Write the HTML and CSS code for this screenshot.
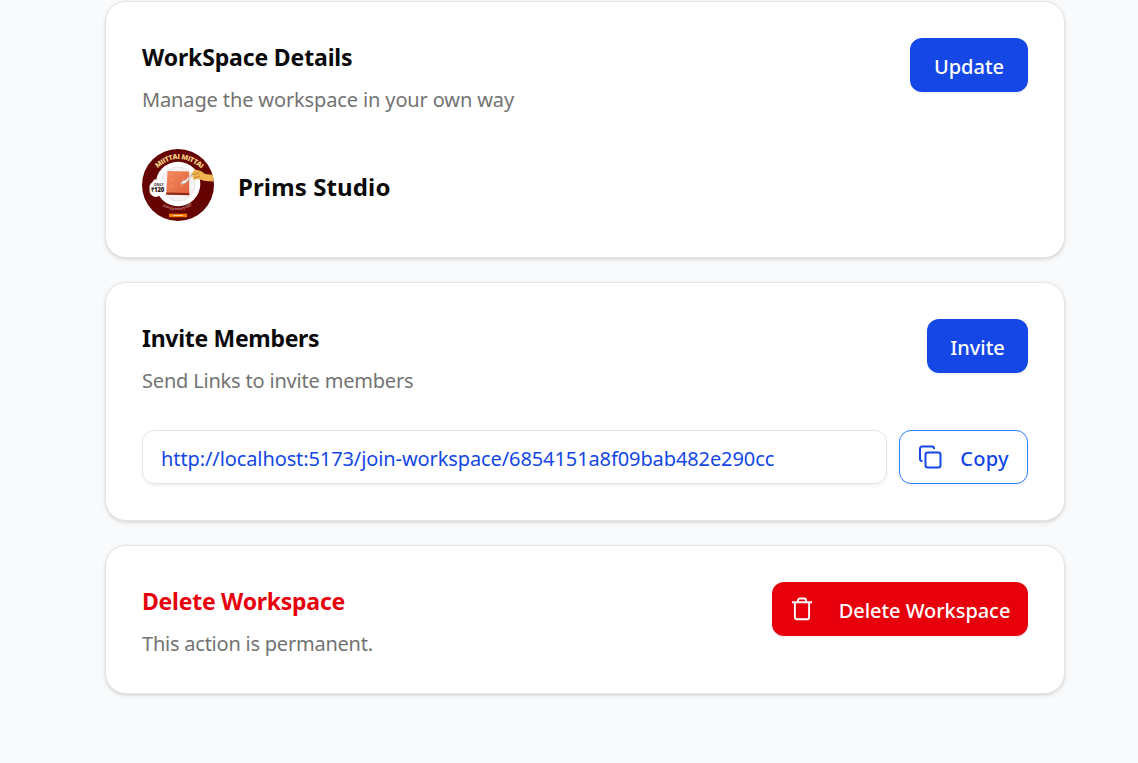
FILE: index.html
```html
<!DOCTYPE html>
<html lang="en">
<head>
<meta charset="utf-8">
<title>Workspace Settings</title>
<link rel="stylesheet" href="styles.css">
</head>
<body>
<main class="page">
  <section class="card">
    <header class="card-head">
      <div>
        <h2 class="title"><span class="t-details">WorkSpace Details</span></h2>
        <p class="sub"><span class="s-manage">Manage the workspace in your own way</span></p>
      </div>
      <button class="btn primary update"><span>Update</span></button>
    </header>
    <div class="identity">
      <svg class="avatar" viewBox="0 0 72 72">
        <defs>
          <clipPath id="round"><circle cx="36" cy="36" r="36"/></clipPath>
          <path id="arc-top" d="M15.500 19.500 Q36 .5 59 19.500"/>
          <path id="arc-bottom" d="M21 57 Q36 66 52 55"/>
          <linearGradient id="sweet" x1="0" y1="0" x2="1" y2="1"><stop offset="0" stop-color="#f5895f"/><stop offset="1" stop-color="#e0623c"/></linearGradient>
        </defs>
        <g clip-path="url(#round)">
          <rect width="72" height="72" fill="#650403"/>
          <circle cx="36" cy="35" r="22.3" fill="#fff"/>
          <circle cx="36" cy="35" r="17" fill="#f4f2f3" stroke="#ddd6d8" stroke-width=".6"/>
          <path d="M10 46.500q-3-2-2.600-6q-1-5 3-7.500q2-4 6.500-3l7 3v12l-7 2q-4 2-6.900-.5z" fill="#fff"/>
          <path d="M10 46.500q-3-2-2.600-6q-1-5 3-7.500q2-4 5-3" fill="none" stroke="#79312b" stroke-width=".5"/>
          <path d="M25.500 22l21.500.5.300 23-23-.5z" fill="url(#sweet)"/>
          <path d="M24.300 43.500l23 .5v2.200l-23-.5z" fill="#8f2b16"/>
          <path d="M29 25l2 1m5-2l3 2m-10 5l3-1m8 0l3 1m-14 6l4 1m5-2l3 1" stroke="#f69b74" stroke-width=".8"/>
          <path d="M38.500 35q1-4 5-4l5-5 2-1-4 6q-3 5-8 4z" fill="#f2e9e5" stroke="#a98d83" stroke-width=".5"/>
          <path d="M49 25l4-4.500 6 1.500 4 3 9 1v6.500l-9-.5-7-2-5 1 1-2-3-1 3-1z" fill="#efb552"/>
          <path d="M50 26l7-2m-5 5l6-2" stroke="#9b5e22" stroke-width=".6"/>
          <text class="a-top"><textPath href="#arc-top" textLength="49">MIITTAI MITTAI</textPath></text>
          <text class="a-only" x="12" y="36.500">ONLY</text>
          <text class="a-price" x="9.300" y="42.800" textLength="13">₹120</text>
          <text class="a-bottom"><textPath href="#arc-bottom" textLength="31">pure joy in every bite!</textPath></text>
          <rect x="27" y="64.700" width="18" height="3.500" fill="#f57c00"/>
          <text class="a-order" x="31" y="67.300" textLength="10">ORDER NOW</text>
        </g>
      </svg>
      <span class="name">Prims Studio</span>
    </div>
  </section>

  <section class="card">
    <header class="card-head">
      <div>
        <h2 class="title"><span class="t-invite">Invite Members</span></h2>
        <p class="sub"><span class="s-send">Send Links to invite members</span></p>
      </div>
      <button class="btn primary invite"><span>Invite</span></button>
    </header>
    <div class="link-row">
      <div class="field"><span>http://localhost:5173/join-workspace/6854151a8f09bab482e290cc</span></div>
      <button class="btn outline">
        <svg class="icon" viewBox="0 0 24 24" fill="none" stroke="currentColor" stroke-width="2">
          <path d="M4.500 16H4a2 2 0 0 1-2-2V3.500a2 2 0 0 1 2-2h10a2 2 0 0 1 2 2V4"/>
          <rect x="7.500" y="7.500" width="15" height="15" rx="2.200"/>
        </svg>
        <span>Copy</span>
      </button>
    </div>
  </section>

  <section class="card">
    <header class="card-head">
      <div>
        <h2 class="title danger-text"><span class="t-delete">Delete Workspace</span></h2>
        <p class="sub"><span class="s-permanent">This action is permanent.</span></p>
      </div>
      <button class="btn danger">
        <svg class="icon" viewBox="0 0 24 24" fill="none" stroke="currentColor" stroke-width="1.900">
          <path d="M2 5.200h20M4.900 5.200v15a2 2 0 0 0 2 2h10.200a2 2 0 0 0 2-2v-15M7.900 5.200V3.500a2 2 0 0 1 2-2h4.200a2 2 0 0 1 2 2v1.700"/>
        </svg>
        <span>Delete Workspace</span>
      </button>
    </header>
  </section>
</main>
</body>
</html>
```

FILE: styles.css
```css
* { box-sizing: border-box; }
body {
  margin: 0;
  background: #f9fafb;
  color: #0a0a0a;
  font-family: "Noto Sans", "Open Sans", sans-serif;
}
.page {
  display: flex;
  flex-direction: column;
  gap: 24px;
  width: 960px;
  height: 763px;
  margin-left: 105px;
  padding-top: 1px;
}
.card {
  flex: none;
  display: flex;
  flex-direction: column;
  gap: 36px;
  padding: 36px;
  background: #fff;
  border: 1px solid #e5e5e5;
  border-radius: 21px;
  box-shadow: 0 1.5px 4.5px rgba(0, 0, 0, .1), 0 1.5px 3px -1.5px rgba(0, 0, 0, .1);
}
.card-head {
  display: flex;
  justify-content: space-between;
  align-items: flex-start;
  height: 75px;
}
.title, .sub { margin: 0; white-space: nowrap; }
.title { padding-top: 1px; font-size: 23px; line-height: 37px; font-weight: 700; }
.sub { padding-top: 8px; font-size: 20px; line-height: 31px; color: #737373; }
.danger-text { color: #e7000b; }
.t-details { letter-spacing: -.14px; }
.t-invite { letter-spacing: -.3px; }
.t-delete { letter-spacing: -.25px; }
.s-manage { letter-spacing: -.13px; }
.s-send { letter-spacing: -.19px; }
.s-permanent { letter-spacing: -.23px; }

.btn {
  flex: none;
  display: flex;
  align-items: center;
  justify-content: center;
  height: 54px;
  padding: 4px 0 0;
  border: 0;
  border-radius: 12px;
  font: 500 20px/30px "Noto Sans", "Open Sans", sans-serif;
  color: #fff;
  white-space: nowrap;
  box-shadow: 0 1.5px 3px rgba(0, 0, 0, .05);
}
.primary { background: #1447e6; }
.update { width: 118px; }
.invite { width: 101px; }
.outline {
  width: 129px;
  gap: 18px;
  background: #fff;
  border: 1px solid #2b7fff;
  color: #1447e6;
}
.outline span { letter-spacing: .2px; }
.danger { width: 256px; gap: 25px; background: #e7000b; }
.danger span { letter-spacing: -.05px; }
.icon { flex: none; width: 24px; height: 24px; margin-top: -5px; }

.identity { display: flex; align-items: center; gap: 24px; height: 72px; }
.avatar { width: 72px; height: 72px; }
.name {
  padding-top: 3px;
  font-size: 24px;
  line-height: 36px;
  font-weight: 700;
  letter-spacing: .12px;
  white-space: nowrap;
}
.avatar text { font-family: "Open Sans", sans-serif; }
.a-top { font-size: 7px; font-weight: 800; fill: #f5cf83; }
.avatar .a-only { font-size: 3.5px; font-weight: 700; fill: #301412; }
.a-price { font-size: 6px; font-weight: 800; fill: #301412; }
.avatar .a-bottom { font-family: "Liberation Serif", serif; font-size: 4.5px; font-style: italic; fill: #e0bcb4; }
.a-order { font-size: 2px; font-weight: 700; fill: #fff; }

.link-row { display: flex; gap: 12px; }
.field {
  flex: 1;
  height: 54px;
  padding: 12px 18px;
  border: 1px solid #e5e5e5;
  border-radius: 12px;
  color: #1447e6;
  font-size: 20px;
  line-height: 31px;
  letter-spacing: -.1px;
  white-space: nowrap;
  box-shadow: 0 1.5px 3px rgba(0, 0, 0, .05);
}
```
